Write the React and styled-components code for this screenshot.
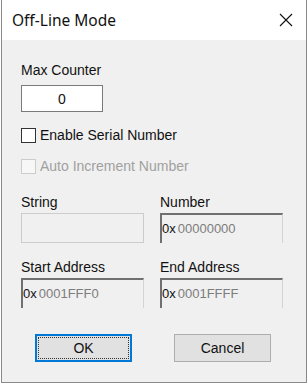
import React from 'react'
import styled, { createGlobalStyle } from 'styled-components'

const GlobalStyle = createGlobalStyle`
    html, body {
        margin: 0;
        padding: 0;
        background: #ffffff;
    }
    body {
        font-family: "Liberation Sans", Arial, sans-serif;
        font-size: 14px;
        color: #000;
    }
`

const Window = styled.div`
    margin-left: 1px;
    width: 306px;
    height: 383px;
    box-sizing: border-box;
    border: 1px solid #8a8a8a;
    border-top: none;
    display: flex;
    flex-direction: column;
    background: #f0f0f0;
`

const TitleBar = styled.div`
    height: 40px;
    flex: none;
    background: #ffffff;
    display: flex;
    align-items: center;
    justify-content: space-between;
    padding: 0 13px 0 10px;
`

const Title = styled.div`
    font-family: "Noto Sans", "Open Sans", sans-serif;
    font-size: 15.5px;
    color: #111;
    margin-top: -1px;
`

const CloseIcon = styled.svg`
    width: 14px;
    height: 14px;
    display: block;
`

const Body = styled.div`
    flex: 1;
    display: flex;
    flex-direction: column;
    padding: 22px 0 0 19px;
`

const Label = styled.div`
    line-height: 16px;
    color: ${p => (p.$disabled ? '#a0a0a0' : '#111')};
    margin-bottom: ${p => p.$gap || 3}px;
`

const CounterBox = styled.div`
    width: 82px;
    height: 27px;
    box-sizing: border-box;
    border: 1px solid #7a7a7a;
    background: #ffffff;
    display: flex;
    align-items: center;
    justify-content: center;
    color: #111;
`

const CheckRow = styled.label`
    display: flex;
    align-items: center;
    gap: 4px;
    height: 16px;
    margin-top: ${p => p.$top}px;
    color: ${p => (p.$disabled ? '#a0a0a0' : '#111')};
`

const CheckBox = styled.span`
    width: 15px;
    height: 15px;
    box-sizing: border-box;
    border: 1px solid ${p => (p.$disabled ? '#cccccc' : '#333333')};
    background: ${p => (p.$disabled ? '#f7f7f7' : '#ffffff')};
`

const Grid = styled.div`
    display: grid;
    grid-template-columns: 123px 123px;
    column-gap: 16px;
    row-gap: 16px;
    margin-top: 20px;
`

const Field = styled.div`
    display: flex;
    flex-direction: column;
`

const PlainBox = styled.div`
    height: 30px;
    box-sizing: border-box;
    border: 1px solid #cccccc;
    background: #f0f0f0;
`

const SunkenBox = styled.div`
    height: 30px;
    box-sizing: border-box;
    border-top: 2px solid #707070;
    border-left: 2px solid #707070;
    border-right: 1px solid #d4d4d4;
    background: #f0f0f0;
    display: flex;
    align-items: flex-start;
    padding-top: 6px;
    font-size: 13px;
    line-height: 15px;
`

const Prefix = styled.span`
    color: #111;
    margin-right: 2px;
`

const HexValue = styled.span`
    color: #7d7d7d;
`

const ButtonRow = styled.div`
    display: flex;
    gap: 42px;
    padding-left: 14px;
    margin-top: 26px;
`

const Button = styled.button`
    width: 97px;
    height: 28px;
    box-sizing: border-box;
    background: #e1e1e1;
    border: 1px solid ${p => (p.$default ? '#0078d7' : '#adadad')};
    box-shadow: ${p => (p.$default ? 'inset 0 0 0 1px #0078d7' : 'none')};
    font-family: "Liberation Sans", Arial, sans-serif;
    font-size: 14px;
    color: #111;
    padding: 2px;
    display: flex;
`

const Focus = styled.span`
    flex: 1;
    display: flex;
    align-items: center;
    justify-content: center;
    border: 1px dotted ${p => (p.$show ? '#333' : 'transparent')};
`

const HexField = ({ label, value }) => (
    <Field>
        <Label>{label}</Label>
        <SunkenBox>
            <Prefix>0x</Prefix>
            <HexValue>{value}</HexValue>
        </SunkenBox>
    </Field>
)

const App = () => {
    return (
        <>
            <GlobalStyle />
            <Window>
                <TitleBar>
                    <Title>Off-Line Mode</Title>
                    <CloseIcon viewBox="0 0 14 14">
                        <path d="M1 1 L13 13 M13 1 L1 13" stroke="#111" strokeWidth="1.1" fill="none" />
                    </CloseIcon>
                </TitleBar>
                <Body>
                    <Label $gap={7}>Max Counter</Label>
                    <CounterBox>0</CounterBox>
                    <CheckRow $top={15}>
                        <CheckBox />
                        Enable Serial Number
                    </CheckRow>
                    <CheckRow $top={15} $disabled>
                        <CheckBox $disabled />
                        Auto Increment Number
                    </CheckRow>
                    <Grid>
                        <Field>
                            <Label>String</Label>
                            <PlainBox />
                        </Field>
                        <HexField label="Number" value="00000000" />
                        <HexField label="Start Address" value="0001FFF0" />
                        <HexField label="End Address" value="0001FFFF" />
                    </Grid>
                    <ButtonRow>
                        <Button $default><Focus $show>OK</Focus></Button>
                        <Button><Focus>Cancel</Focus></Button>
                    </ButtonRow>
                </Body>
            </Window>
        </>
    )
}

export default App
